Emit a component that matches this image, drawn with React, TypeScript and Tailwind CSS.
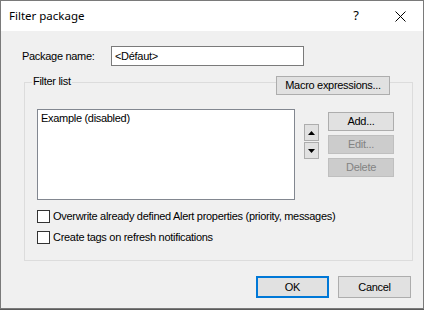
import React from 'react';

const ui = { fontFamily: '"Liberation Sans", Arial, sans-serif' };
const title = { fontFamily: '"Noto Sans", "Open Sans", sans-serif' };

const Btn: React.FC<{ label: string; disabled?: boolean; className?: string }> = ({ label, disabled, className = '' }) => (
  <div
    className={`flex items-center justify-center border text-[11px] leading-none ${
      disabled ? 'bg-[#cccccc] border-[#bfbfbf] text-[#838383]' : 'bg-[#e1e1e1] border-[#adadad] text-black'
    } ${className}`}
  >
    {label}
  </div>
);

const Check: React.FC<{ label: string }> = ({ label }) => (
  <div className="flex items-center gap-[3px]">
    <div className="w-[13px] h-[13px] border border-[#333333] bg-white" />
    <span className="text-[11px] leading-[13px]">{label}</span>
  </div>
);

const Arrow: React.FC<{ up?: boolean }> = ({ up }) => (
  <div className="w-[15px] h-[17px] border border-[#adadad] bg-[#e1e1e1] flex items-center justify-center">
    <svg width="7" height="4" viewBox="0 0 7 4">
      {up ? <polygon points="0,4 7,4 3.5,0" fill="#000" /> : <polygon points="0,0 7,0 3.5,4" fill="#000" />}
    </svg>
  </div>
);

export default function App() {
  return (
    <div className="w-[424px] h-[310px] bg-[#5a5a5a] overflow-hidden tracking-[-0.3px]" style={ui}>
      <div className="h-[309px] border border-[#7a7a7a] flex flex-col bg-[#f0f0f0] text-black">
        {/* title bar */}
        <div className="h-[30px] bg-white flex items-center shrink-0 tracking-normal">
          <span className="ml-[8px] text-[11.5px]" style={title}>Filter package</span>
          <span className="ml-auto mr-[36px] text-[13px]" style={title}>?</span>
          <svg className="mr-[17px]" width="11" height="11" viewBox="0 0 11 11">
            <path d="M0.5 0.5 L10.5 10.5 M10.5 0.5 L0.5 10.5" stroke="#000" strokeWidth="1" />
          </svg>
        </div>

        <div className="flex-1 flex flex-col">
          {/* package name */}
          <div className="flex items-center mt-[15px] pl-[21px]">
            <span className="text-[11px] w-[89px]">Package name:</span>
            <div className="w-[193px] h-[20px] border border-[#7a7a7a] bg-white flex items-center pl-[3px] text-[11px]">
              &lt;Défaut&gt;
            </div>
          </div>

          {/* filter list group */}
          <div className="ml-[23px] mr-[10px] mt-[16px] h-[179px] border border-[#dcdcdc] flex flex-col">
            <div className="flex items-start justify-between -mt-[7px] pl-[7px] pr-[22px]">
              <span className="bg-[#f0f0f0] px-[1px] text-[11px] leading-[13px] -mt-[1px]">Filter list</span>
              <Btn label="Macro expressions..." className="w-[114px] h-[19px]" />
            </div>

            <div className="flex items-start mt-[14px] pl-[12px]">
              <div className="w-[258px] h-[91px] border border-[#828790] bg-white px-[3px] pt-[2px] text-[11px] leading-[13px]">
                Example (disabled)
              </div>
              <div className="flex flex-col gap-[1px] ml-[9px] mt-[15px]">
                <Arrow up />
                <Arrow />
              </div>
              <div className="flex flex-col gap-[4px] ml-[9px] mt-[3px]">
                <Btn label="Add..." className="w-[66px] h-[19px]" />
                <Btn label="Edit..." disabled className="w-[66px] h-[19px]" />
                <Btn label="Delete" disabled className="w-[66px] h-[19px]" />
              </div>
            </div>

            <div className="flex flex-col gap-[8px] mt-[10px] pl-[12px]">
              <Check label="Overwrite already defined Alert properties (priority, messages)" />
              <Check label="Create tags on refresh notifications" />
            </div>
          </div>

          {/* footer buttons */}
          <div className="flex justify-end gap-[9px] mt-[15px] pr-[12px]">
            <div className="w-[73px] h-[22px] border-2 border-[#0078d7] bg-[#e1e1e1] flex items-center justify-center text-[11px]">
              OK
            </div>
            <Btn label="Cancel" className="w-[73px] h-[22px]" />
          </div>
        </div>
      </div>
    </div>
  );
}
